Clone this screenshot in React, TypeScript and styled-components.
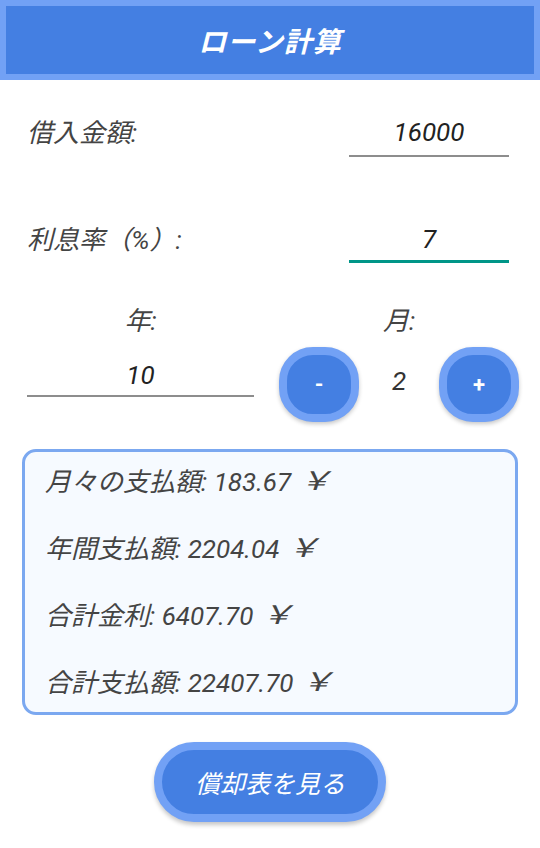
import React, { useState } from 'react';
import styled, { createGlobalStyle } from 'styled-components';

const GlobalStyle = createGlobalStyle`
  html, body {
    margin: 0;
    padding: 0;
    background: #ffffff;
  }
  body {
    width: 540px;
    font-family: Roboto, 'Noto Sans CJK JP', sans-serif;
  }
  * {
    box-sizing: border-box;
  }
`;

const Page = styled.div`
  width: 540px;
  min-height: 848px;
  background: #ffffff;
  font-style: italic;
`;

const Header = styled.header`
  height: 80px;
  border: 6px solid #72a1f5;
  background: #447fe2;
  display: flex;
  align-items: center;
  justify-content: center;
  h1 {
    margin: 0;
    color: #ffffff;
    font-size: 28px;
    font-weight: 700;
    font-style: italic;
    letter-spacing: 1px;
  }
`;

const Form = styled.div`
  padding: 29px 31px 0 27px;
  display: flex;
  flex-direction: column;
`;

const FieldRow = styled.div<{ $top: number }>`
  display: flex;
  align-items: center;
  justify-content: space-between;
  margin-top: ${(p) => p.$top}px;
`;

const Label = styled.span`
  font-size: 26px;
  line-height: 31px;
  color: #444444;
`;

const NumberInput = styled.input<{ $focused?: boolean; $width: number; $height: number }>`
  width: ${(p) => p.$width}px;
  height: ${(p) => p.$height}px;
  border: none;
  border-bottom: ${(p) => (p.$focused ? '3px solid #009688' : '2px solid #8d8d8d')};
  background: transparent;
  outline: none;
  text-align: center;
  font-family: Roboto, 'Noto Sans CJK JP', sans-serif;
  font-style: italic;
  font-size: 26px;
  color: #222222;
  padding: 0;
`;

const TermGrid = styled.div`
  display: grid;
  grid-template-columns: 227px 240px;
  column-gap: 25px;
  margin-top: 43px;
`;

const TermCol = styled.div`
  display: flex;
  flex-direction: column;
  align-items: center;
`;

const ColLabel = styled(Label)`
  text-align: center;
`;

const YearInput = styled(NumberInput)`
  margin-top: 18px;
`;

const Stepper = styled.div`
  margin-top: 10px;
  display: flex;
  align-items: center;
  width: 100%;
`;

const RoundButton = styled.button`
  width: 80px;
  height: 75px;
  border: 8px solid #72a1f5;
  border-radius: 34px;
  background: #447fe2;
  color: #ffffff;
  font-family: Roboto, sans-serif;
  font-weight: 700;
  font-style: normal;
  font-size: 22px;
  padding: 0;
  box-shadow: 0 2px 4px rgba(0, 0, 0, 0.22);
  cursor: pointer;
`;

const StepValue = styled.span`
  width: 80px;
  text-align: center;
  font-size: 26px;
  color: #333333;
  padding-bottom: 8px;
`;

const ResultBox = styled.div`
  margin: 27px 22px 0 22px;
  height: 266px;
  border: 3px solid #7ba8f0;
  border-radius: 14px;
  background: #f6faff;
  padding: 15px 20px 13px;
  display: flex;
  flex-direction: column;
  gap: 36px;
`;

const ResultLine = styled.p`
  margin: 0;
  height: 31px;
  font-size: 26px;
  line-height: 31px;
  color: #444444;
  white-space: nowrap;
`;

const Yen = styled.span`
  display: inline-block;
  margin-left: 11px;
  font-family: 'Noto Sans CJK JP', sans-serif;
  line-height: 23px;
  vertical-align: top;
  transform: scaleX(1.3);
`;

const Footer = styled.div`
  display: flex;
  justify-content: center;
  margin-top: 27px;
`;

const ScheduleButton = styled.button`
  width: 232px;
  height: 80px;
  border: 8px solid #72a1f5;
  border-radius: 40px;
  background: #447fe2;
  color: #ffffff;
  font-family: Roboto, 'Noto Sans CJK JP', sans-serif;
  font-style: italic;
  font-size: 25px;
  padding: 0;
  box-shadow: 0 3px 4px rgba(0, 0, 0, 0.22);
  cursor: pointer;
`;

function App() {
  const [months, setMonths] = useState(2);

  const results = [
    { label: '月々の支払額', value: '183.67' },
    { label: '年間支払額', value: '2204.04' },
    { label: '合計金利', value: '6407.70' },
    { label: '合計支払額', value: '22407.70' },
  ];

  return (
    <Page>
      <GlobalStyle />
      <Header>
        <h1>ローン計算</h1>
      </Header>
      <Form>
        <FieldRow $top={0}>
          <Label>借入金額:</Label>
          <NumberInput $width={160} $height={48} defaultValue="16000" />
        </FieldRow>
        <FieldRow $top={61}>
          <Label>利息率（%）:</Label>
          <NumberInput $width={160} $height={45} $focused defaultValue="7" />
        </FieldRow>
        <TermGrid>
          <TermCol>
            <ColLabel>年:</ColLabel>
            <YearInput $width={227} $height={42} defaultValue="10" />
          </TermCol>
          <TermCol>
            <ColLabel>月:</ColLabel>
            <Stepper>
              <RoundButton onClick={() => setMonths((m) => Math.max(0, m - 1))}>-</RoundButton>
              <StepValue>{months}</StepValue>
              <RoundButton onClick={() => setMonths((m) => Math.min(11, m + 1))}>+</RoundButton>
            </Stepper>
          </TermCol>
        </TermGrid>
      </Form>
      <ResultBox>
        {results.map((r) => (
          <ResultLine key={r.label}>
            {r.label}: {r.value}
            <Yen>￥</Yen>
          </ResultLine>
        ))}
      </ResultBox>
      <Footer>
        <ScheduleButton>償却表を見る</ScheduleButton>
      </Footer>
    </Page>
  );
}

export default App;
